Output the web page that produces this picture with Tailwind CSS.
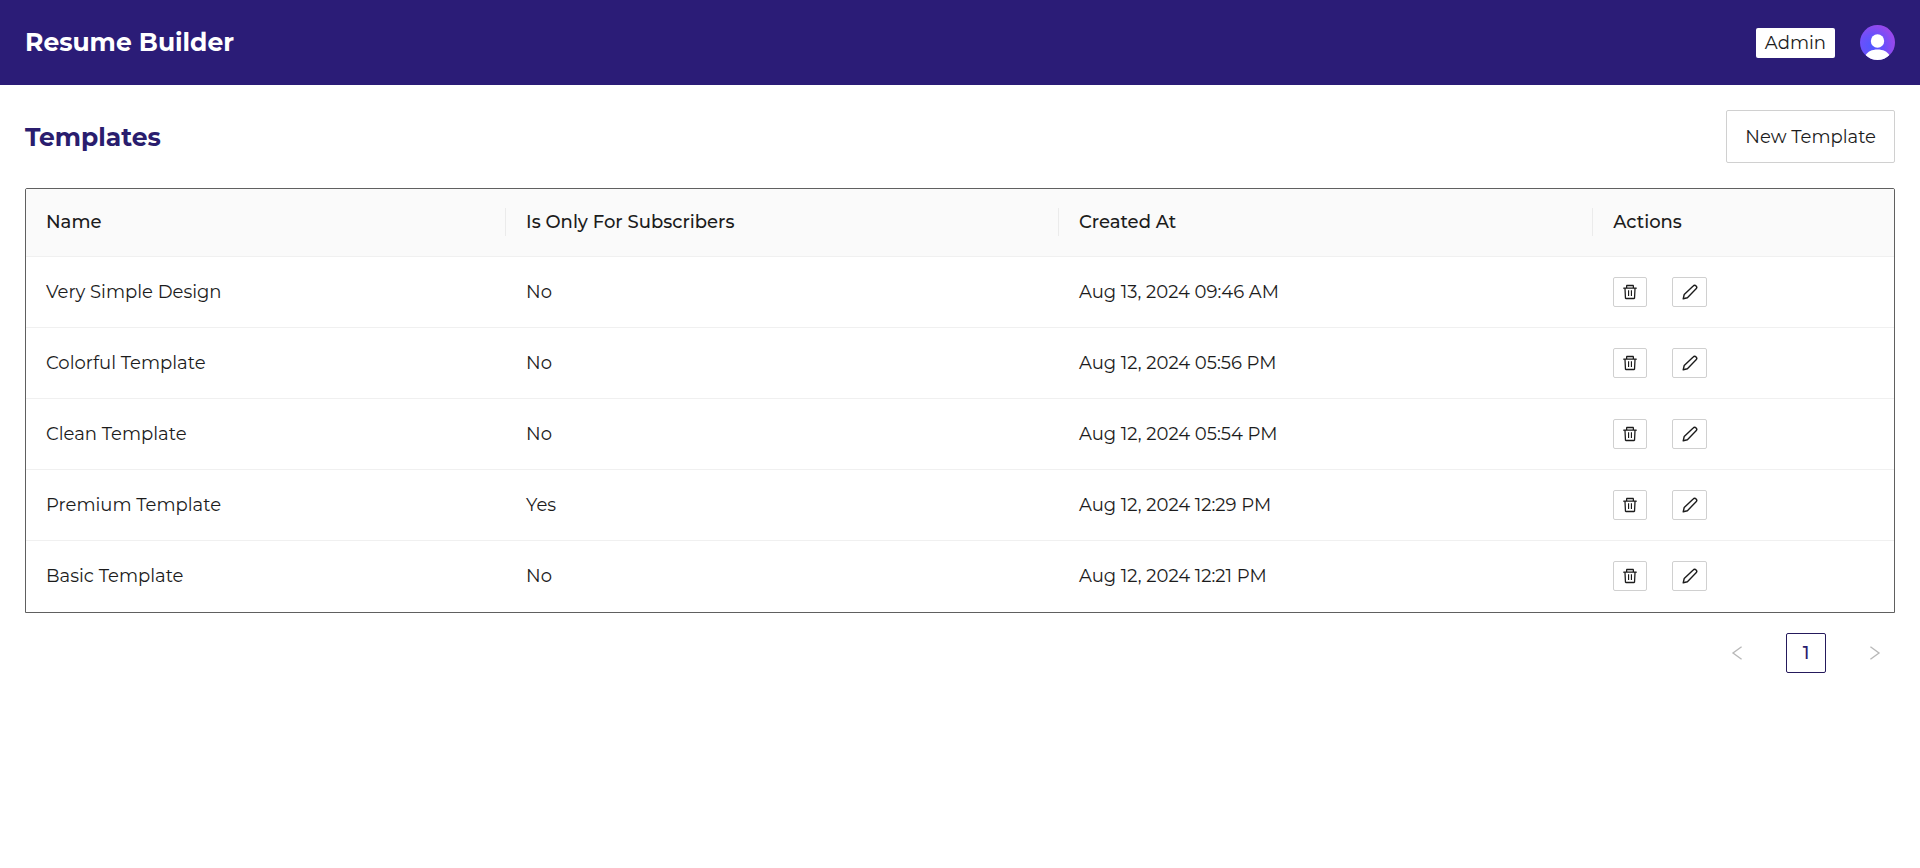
<!DOCTYPE html>
<html lang="en">
<head>
<meta charset="utf-8">
<meta name="viewport" content="width=device-width, initial-scale=1">
<title>Resume Builder</title>
<script src="https://cdn.jsdelivr.net/npm/@tailwindcss/browser@4"></script>
</head>
<body class="min-h-screen bg-white font-[Montserrat,Inter,sans-serif] text-[18px] leading-7 text-[#1c1c1c]">
<svg class="hidden" aria-hidden="true">
  <symbol id="trash" viewBox="64 64 896 896"><path d="M360 184h-8c4.400 0 8-3.600 8-8v8h304v-8c0 4.400 3.600 8 8 8h-8v72h72v-80c0-35.300-28.700-64-64-64H352c-35.300 0-64 28.700-64 64v80h72v-72zm504 72H160c-17.700 0-32 14.300-32 32v32c0 4.400 3.600 8 8 8h60.400l24.700 523c1.600 34.100 29.800 61 63.900 61h454c34.200 0 62.300-26.800 63.900-61l24.700-523H888c4.400 0 8-3.600 8-8v-32c0-17.700-14.300-32-32-32zM731.300 840H292.700l-24.200-512h487l-24.200 512zM400 416h64v320h-64zM560 416h64v320h-64z"/></symbol>
  <symbol id="pencil" viewBox="0 0 16 16"><path d="M1.200 14.800l1-4.300L11.200 1.900a2.050 2.050 0 0 1 2.900 2.900L5.400 13.700z" fill="none" stroke="currentColor" stroke-width="1.400" stroke-linejoin="round"/></symbol>
</svg>
<header class="flex items-center justify-between bg-[#2b1c77] p-[25px]">
  <h1 class="text-[25px] leading-[35px] font-bold text-white">Resume Builder</h1>
  <div class="flex items-center gap-[25px]">
    <button class="h-[30px] rounded-xs bg-white px-[9px] leading-[30px]">Admin</button>
    <button aria-label="Account" class="size-[35px] overflow-hidden rounded-full">
      <svg viewBox="0 0 35 35" class="size-full">
        <defs><radialGradient id="g" cx=".35" cy=".6" r=".65"><stop offset="0" stop-color="#5058ff"/><stop offset=".5" stop-color="#6a50fb"/><stop offset="1" stop-color="#9948ec"/></radialGradient></defs>
        <rect width="35" height="35" fill="url(#g)"/>
        <circle cx="17.500" cy="16" r="6.700" fill="#fff"/>
        <path d="M5.500 30.500C7.500 26.500 12 24.500 17.500 24.500s10 2 12 6L24 35H11z" fill="#fff"/>
      </svg>
    </button>
  </div>
</header>
<main class="p-[25px]">
  <div class="flex items-center justify-between">
    <h2 class="text-[25px] leading-8 font-bold text-[#2a1d6e]">Templates</h2>
    <button class="h-[53px] rounded-xs border border-[#d0d0d0] bg-white px-[18px]">New Template</button>
  </div>
  <div class="mt-[25px] overflow-hidden rounded-t-xs border border-[#606060] pb-px">
    <table class="w-full table-fixed text-left">
      <colgroup><col class="w-[25.700%]"><col class="w-[29.600%]"><col class="w-[28.600%]"><col></colgroup>
      <thead class="bg-[#fafafa]">
        <tr class="h-[67px] border-b border-[#f0f0f0]">
          <th scope="col" class="py-0 pl-5 font-medium"><div class="border-r border-[#ebebeb]">Name</div></th>
          <th scope="col" class="py-0 pl-5 font-medium"><div class="border-r border-[#ebebeb]">Is Only For Subscribers</div></th>
          <th scope="col" class="py-0 pl-5 font-medium"><div class="border-r border-[#ebebeb]">Created At</div></th>
          <th scope="col" class="py-0 pl-5 font-medium">Actions</th>
        </tr>
      </thead>
      <tbody id="rows"></tbody>
    </table>
  </div>
  <nav aria-label="Pagination" class="mt-5 flex justify-end gap-[29px]">
    <button disabled aria-label="Previous page" class="flex size-10 items-center justify-center text-[#b8b8b8]"><svg viewBox="0 0 10 14" class="h-4 w-3" fill="none" stroke="currentColor" stroke-width="1.200"><path d="M9 1.500L1.500 7 9 12.500"/></svg></button>
    <button aria-current="page" class="size-10 rounded-xs border border-[#251a5c] font-medium text-[#2a1d6e]">1</button>
    <button disabled aria-label="Next page" class="flex size-10 items-center justify-center text-[#b8b8b8]"><svg viewBox="0 0 10 14" class="h-4 w-3" fill="none" stroke="currentColor" stroke-width="1.200"><path d="M1 1.500L8.500 7 1 12.500"/></svg></button>
  </nav>
</main>
<script>
const data = [
  ["Very Simple Design", "No", "Aug 13, 2024 09:46 AM"],
  ["Colorful Template", "No", "Aug 12, 2024 05:56 PM"],
  ["Clean Template", "No", "Aug 12, 2024 05:54 PM"],
  ["Premium Template", "Yes", "Aug 12, 2024 12:29 PM"],
  ["Basic Template", "No", "Aug 12, 2024 12:21 PM"]
];
document.getElementById("rows").innerHTML = data.map(r => `
<tr class="h-[71px] border-b border-[#f0f0f0] last:border-b-0">
  ${r.map(c => `<td class="py-0 pl-5">${c}</td>`).join("")}
  <td class="py-0 pl-5"><div class="flex gap-[25px]">
    <button aria-label="Delete ${r[0]}" class="flex h-[30px] w-[34px] items-center justify-center rounded-xs border border-[#d0d0d0]"><svg class="size-4" fill="currentColor"><use href="#trash"/></svg></button>
    <button aria-label="Edit ${r[0]}" class="flex h-[30px] w-[35px] items-center justify-center rounded-xs border border-[#d0d0d0]"><svg class="size-4"><use href="#pencil"/></svg></button>
  </div></td>
</tr>`).join("");
</script>
</body>
</html>
